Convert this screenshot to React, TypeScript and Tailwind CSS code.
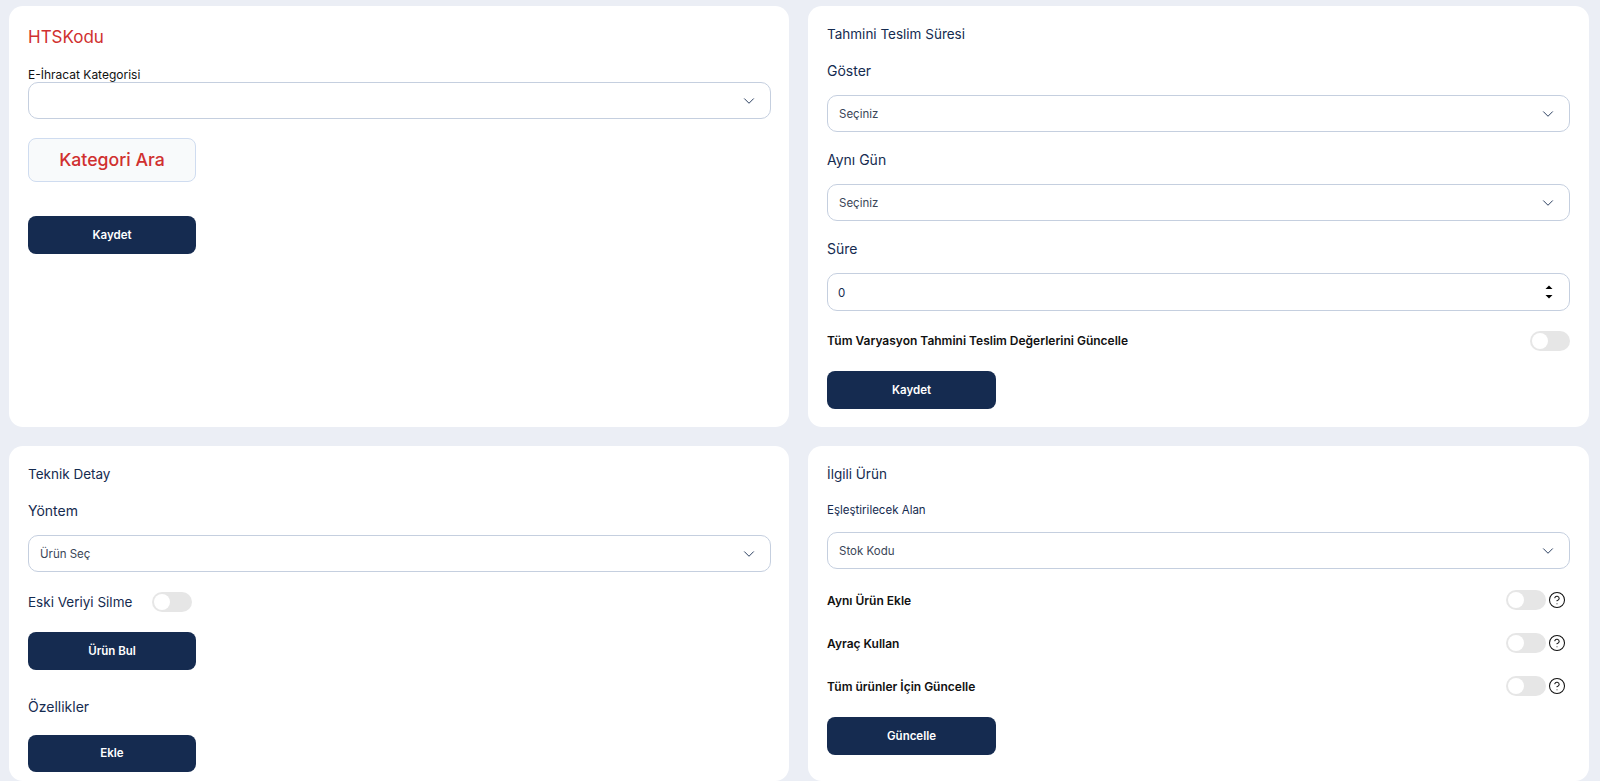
import { ChevronDown, CircleHelp } from "lucide-react";
import type { ReactNode } from "react";

function Card({ children, className = "" }: { children: ReactNode; className?: string }) {
  return <section className={`bg-white rounded-[14px] pl-[19px] flex flex-col ${className}`}>{children}</section>;
}

function Select({ value = "", className = "" }: { value?: string; className?: string }) {
  return (
    <div className={`h-[37px] border border-[#c5cfdf] rounded-[10px] pl-[11px] pr-[12px] flex items-center justify-between text-[11.5px] text-[#3b4657] ${className}`}>
      <span className="mt-[2px]">{value}</span>
      <ChevronDown size={18} strokeWidth={1.2} className="text-[#152b50]" />
    </div>
  );
}

function Toggle({ className = "" }: { className?: string }) {
  return (
    <div className={`w-10 h-5 rounded-full bg-[#e6e6e6] p-[2px] shrink-0 ${className}`}>
      <div className="w-4 h-4 rounded-full bg-white" />
    </div>
  );
}

function Button({ label, wide = false, short = false, className = "" }: { label: string; wide?: boolean; short?: boolean; className?: string }) {
  return (
    <div className={`${wide ? "w-[169px]" : "w-[168px]"} ${short ? "h-[37px] pt-[1px]" : "h-[38px] pt-[2px]"} bg-[#152b50] rounded-[8px] text-white text-[11.5px] font-semibold flex items-center justify-center ${className}`}>
      {label}
    </div>
  );
}

function Label({ children, className = "" }: { children: ReactNode; className?: string }) {
  return <div className={`text-[14px] leading-[20px] text-[#152b50] ${className}`}>{children}</div>;
}

function HelpRow({ label, className = "" }: { label: string; className?: string }) {
  return (
    <div className={`flex items-center justify-between h-5 ${className}`}>
      <span className="mt-[2px] text-[12px] font-semibold text-[#111]">{label}</span>
      <div className="flex items-center gap-[2px] pr-[4px]">
        <Toggle />
        <CircleHelp size={18} strokeWidth={1.4} className="text-[#111]" />
      </div>
    </div>
  );
}

export default function App() {
  return (
    <div
      className="h-[781px] overflow-hidden bg-[#ebeef5] pl-[9px] pt-[6px] grid grid-cols-[780px_781px] gap-x-[19px] gap-y-[19px] grid-rows-[421px_1fr]"
      style={{ fontFamily: '"Inter", "Noto Sans", sans-serif' }}
    >
      <Card className="pr-[18px]">
        <h2 className="mt-[19px] text-[17px] leading-[24px] text-[#d0302f]">HTSKodu</h2>
        <div className="mt-[20px] text-[12px] leading-[12px] text-[#111]">E-İhracat Kategorisi</div>
        <Select className="mt-[1px]" />
        <div className="mt-[19px] w-[168px] h-[44px] rounded-[8px] border border-[#cfdcf0] bg-[#f8fafb] text-[#d0302f] text-[17.7px] font-medium flex items-center justify-center">
          Kategori Ara
        </div>
        <Button label="Kaydet" className="mt-[34px]" />
      </Card>

      <Card className="pr-[19px]">
        <h2 className="mt-[18px] text-[13.5px] leading-[20px] text-[#152b50]">Tahmini Teslim Süresi</h2>
        <Label className="mt-[17px]">Göster</Label>
        <Select value="Seçiniz" className="mt-[14px]" />
        <Label className="mt-[18px]">Aynı Gün</Label>
        <Select value="Seçiniz" className="mt-[14px]" />
        <Label className="mt-[18px]">Süre</Label>
        <div className="mt-[14px] h-[38px] border border-[#c5cfdf] rounded-[10px] pl-[10px] pr-[15px] flex items-center justify-between text-[11.5px] text-[#152b50]">
          <span className="mt-[3px]">0</span>
          <svg width="10" height="16" viewBox="0 0 10 16" aria-hidden="true">
            <path d="M5 1.5 L8.5 5 H1.5 Z" fill="#000" />
            <path d="M1.5 11 H8.5 L5 14.5 Z" fill="#000" />
          </svg>
        </div>
        <div className="mt-[20px] flex items-center justify-between h-5">
          <span className="text-[12px] font-semibold text-[#111]">Tüm Varyasyon Tahmini Teslim Değerlerini Güncelle</span>
          <Toggle />
        </div>
        <Button label="Kaydet" wide className="mt-[20px]" />
      </Card>

      <Card className="pr-[18px]">
        <h2 className="mt-[18px] text-[13.5px] leading-[20px] text-[#152b50]">Teknik Detay</h2>
        <Label className="mt-[17px]">Yöntem</Label>
        <Select value="Ürün Seç" className="mt-[14px]" />
        <div className="mt-[20px] flex items-center gap-[20px] h-5">
          <span className="text-[13.5px] leading-[20px] text-[#152b50]">Eski Veriyi Silme</span>
          <Toggle />
        </div>
        <Button label="Ürün Bul" className="mt-[20px]" />
        <Label className="mt-[27px]">Özellikler</Label>
        <Button label="Ekle" short className="mt-[18px]" />
      </Card>

      <Card className="pr-[19px]">
        <h2 className="mt-[18px] text-[13.5px] leading-[20px] text-[#152b50]">İlgili Ürün</h2>
        <div className="mt-[17px] text-[11.5px] leading-[18px] text-[#152b50]">Eşleştirilecek Alan</div>
        <Select value="Stok Kodu" className="mt-[13px]" />
        <HelpRow label="Aynı Ürün Ekle" className="mt-[21px]" />
        <HelpRow label="Ayraç Kullan" className="mt-[23px]" />
        <HelpRow label="Tüm ürünler İçin Güncelle" className="mt-[23px]" />
        <Button label="Güncelle" wide className="mt-[21px]" />
      </Card>
    </div>
  );
}
